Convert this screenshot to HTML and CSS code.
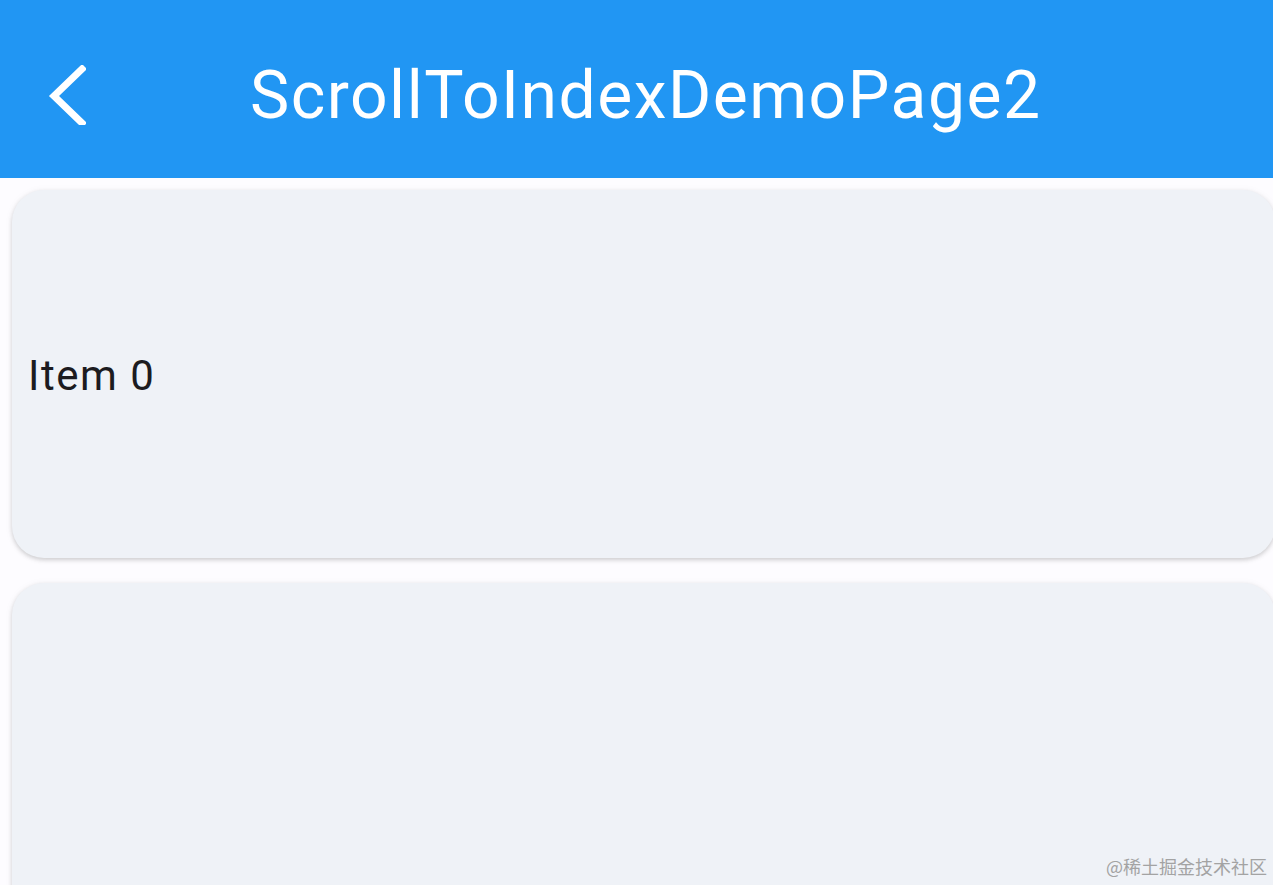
FILE: index.html
```html
<!DOCTYPE html>
<html>
<head>
<meta charset="utf-8">
<link rel="stylesheet" href="styles.css">
</head>
<body>
<header class="appbar">
  <button class="back" aria-label="Back">
    <svg width="40" height="60" viewBox="0 0 40 60"><path d="M36 4 L8 31 L36 58" fill="none" stroke="#fff" stroke-width="7" stroke-linecap="square"/></svg>
  </button>
  <h1 class="title">ScrollToIndexDemoPage2</h1>
</header>
<main class="list">
  <div class="card"><span class="label">Item 0</span></div>
  <div class="card"><span class="label">Item 1</span></div>
</main>
<div class="watermark">@稀土掘金技术社区</div>
</body>
</html>
```
FILE: styles.css
```css
html, body {
  margin: 0;
  padding: 0;
  width: 1273px;
  height: 885px;
  overflow: hidden;
  background: #fdfcff;
  font-family: Roboto, "Noto Sans", sans-serif;
}
.appbar {
  height: 178px;
  background: #2196f3;
  display: flex;
  align-items: center;
  box-sizing: border-box;
  padding-left: 44px;
}
.back {
  background: none;
  border: 0;
  padding: 0;
  width: 44px;
  height: 62px;
  display: flex;
  align-items: center;
  justify-content: center;
  margin-top: 11px;
}
.title {
  margin: 12px 0 0 162px;
  color: #fff;
  font-weight: 400;
  font-size: 66px;
  letter-spacing: 1.5px;
}
.list {
  display: flex;
  flex-direction: column;
  gap: 25px;
  padding: 12px 0 0 12px;
  width: 1263px;
}
.card {
  height: 368px;
  flex: none;
  background: #eff2f7;
  border-radius: 32px;
  box-shadow: 0 2px 4px rgba(0,0,0,0.16), 0 1px 8px rgba(0,0,0,0.05);
  display: flex;
  align-items: center;
  padding-left: 16px;
}
.label {
  font-size: 42px;
  letter-spacing: 1.5px;
  color: #1c1b1f;
  margin-top: 2px;
}
.card + .card .label { visibility: hidden; }
.watermark {
  position: absolute;
  right: 6px;
  bottom: 6px;
  font-family: "Noto Sans CJK SC", sans-serif;
  font-size: 18px;
  color: #a3a3a3;
}
```
